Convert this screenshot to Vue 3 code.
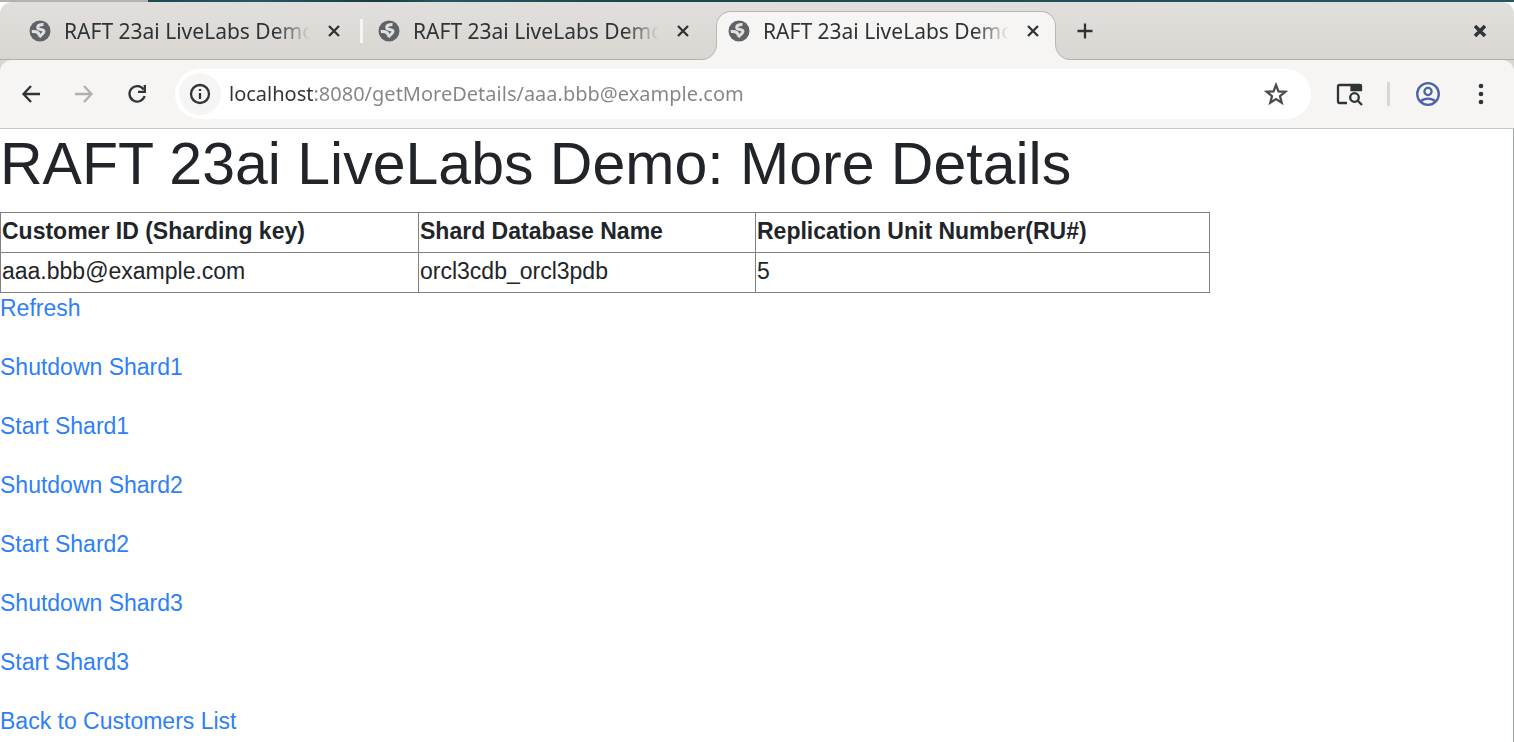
<script setup>
import { ref } from 'vue'

const title = 'RAFT 23ai LiveLabs Demo: More Details'
const tabs = [
  { id: 1, active: false },
  { id: 2, active: false },
  { id: 3, active: true },
]
const address = ref('localhost:8080/getMoreDetails/aaa.bbb@example.com')
const actions = [
  'Refresh',
  'Shutdown Shard1',
  'Start Shard1',
  'Shutdown Shard2',
  'Start Shard2',
  'Shutdown Shard3',
  'Start Shard3',
  'Back to Customers List',
]
</script>

<template>
  <div class="window">
    <div class="desktop"></div>
    <header class="strip">
      <div class="tabs">
        <div v-for="tab in tabs" :key="tab.id" class="tab" :class="{ active: tab.active }">
          <svg v-if="tab.active" class="flare left" viewBox="0 0 16 16" aria-hidden="true">
            <path class="fill" d="M16 0v16H0C9 16 15.5 9 15.5 0z" />
            <path class="edge" d="M0 15.5C9 15.5 15.5 9 15.5 0" />
          </svg>
          <button class="tab-label">
            <svg class="globe" viewBox="0 0 22 22" aria-hidden="true">
              <circle cx="11" cy="11" r="10.5" />
              <path class="land" d="M14.500 4.400C11.500 4.200 8.300 5.500 8.800 8C9.300 10.300 14.500 8.700 15 11.400C15.200 13.800 12 14 10.500 17.300" />
              <path class="land" d="M2.800 11.600C6 11.200 9.800 11.800 10.300 15.500" />
            </svg>
            <span class="tab-title">{{ title }}</span>
          </button>
          <button class="tab-close" aria-label="Close tab">
            <svg width="14" height="14" viewBox="0 0 14 14"><path d="M2 2l10 10M12 2L2 12" /></svg>
          </button>
          <svg v-if="tab.active" class="flare right" viewBox="0 0 16 16" aria-hidden="true">
            <path class="fill" d="M0 0v16H16C7 16 .5 9 .5 0z" />
            <path class="edge" d="M16 15.5C7 15.500 .5 9 .5 0" />
          </svg>
        </div>
      </div>
      <button class="new-tab" aria-label="New tab">
        <svg width="16" height="16" viewBox="0 0 16 16"><path d="M8 .5v15M.5 8h15" /></svg>
      </button>
      <button class="close-window" aria-label="Close window">
        <svg width="14" height="14" viewBox="0 0 14 14"><path d="M2 2l10 10M12 2L2 12" /></svg>
      </button>
    </header>

    <div class="toolbar-back">
      <nav class="toolbar">
        <button class="tool" aria-label="Back">
          <svg width="20" height="20" viewBox="0 0 20 20"><path d="M19 10H3M10 2L2.500 10l7.500 8" /></svg>
        </button>
        <button class="tool off" aria-label="Forward" disabled>
          <svg width="20" height="20" viewBox="0 0 20 20"><path d="M1 10h16M10 2l7.500 8-7.500 8" /></svg>
        </button>
        <button class="tool" aria-label="Reload">
          <svg width="20" height="20" viewBox="0 0 20 20">
            <path d="M16.600 5.500A7.700 7.700 0 1 0 17.600 12" />
            <path d="M17.800 1v6.800H11" />
          </svg>
        </button>
        <div class="address">
          <button class="site-info" aria-label="Site information">
            <svg width="22" height="22" viewBox="0 0 22 22">
              <circle cx="11" cy="11" r="9" />
              <path d="M11 10v6M11 6v2" />
            </svg>
          </button>
          <input v-model="address" class="url" type="text" aria-label="Address" spellcheck="false" />
          <button class="tool star" aria-label="Bookmark this page">
            <svg width="24" height="24" viewBox="0 0 24 24">
              <path d="M12 3l2.500 6.300 6.700.5-5.200 4.300 1.700 6.600L12 17.100l-5.700 3.600L8 14.100 2.800 9.800l6.700-.5z" />
            </svg>
          </button>
        </div>
        <button class="tool" aria-label="Side panel search">
          <svg width="28" height="24" viewBox="0 0 28 24">
            <path d="M11 21H3.500Q2 21 2 19.500V4.500Q2 3 3.500 3H23.500Q25 3 25 4.500V9" />
            <path class="solid" d="M15.500 3.500h9V8h-9z" />
            <circle cx="18.500" cy="15.500" r="4.300" />
            <path d="M21.500 18.500l4.500 4.500" />
          </svg>
        </button>
        <span class="divider"></span>
        <button class="tool profile" aria-label="Profile">
          <svg width="24" height="24" viewBox="0 0 24 24">
            <circle cx="12" cy="12" r="10.800" />
            <circle cx="12" cy="9.500" r="3.600" />
            <path d="M4.500 19.500C8.500 15.600 15.500 15.600 19.500 19.500" />
          </svg>
        </button>
        <button class="tool menu" aria-label="Menu">
          <svg width="6" height="22" viewBox="0 0 6 22">
            <circle cx="3" cy="3" r="2.300" /><circle cx="3" cy="11" r="2.300" /><circle cx="3" cy="19" r="2.300" />
          </svg>
        </button>
      </nav>
    </div>

    <main class="page">
      <h1>{{ title }}</h1>
      <table>
        <thead>
          <tr>
            <th class="customer">Customer ID (Sharding key)</th>
            <th class="shard">Shard Database Name</th>
            <th>Replication Unit Number(RU#)</th>
          </tr>
        </thead>
        <tbody>
          <tr>
            <td>aaa.bbb@example.com</td>
            <td>orcl3cdb_orcl3pdb</td>
            <td>5</td>
          </tr>
        </tbody>
      </table>
      <ul class="actions">
        <li v-for="action in actions" :key="action"><a href="#">{{ action }}</a></li>
      </ul>
    </main>
  </div>
</template>

<style>
body {
  overflow: hidden;
}
</style>

<style scoped>
.window {
  display: flex;
  flex-direction: column;
  min-height: 100vh;
  background: #fff;
  color: #212529;
  font-family: "Noto Sans", sans-serif;
}
.window * {
  box-sizing: border-box;
}
button {
  display: flex;
  align-items: center;
  justify-content: center;
  padding: 0;
  border: 0;
  background: none;
  color: inherit;
  font: inherit;
}
svg {
  flex: none;
  fill: none;
  stroke: currentColor;
  stroke-width: 2.3;
}
.desktop {
  height: 2px;
  background: linear-gradient(90deg, #b4b2b0 148px, #1d4a50 148px, #24585e 260px, #163b40 380px, #24585e 440px, #1b464b 620px, #24585e);
}
.strip {
  display: flex;
  align-items: stretch;
  height: 58px;
  padding: 0 13px 0 18px;
  border-bottom: 1px solid #b3b1af;
  border-radius: 12px 12px 0 0;
  background: linear-gradient(#e1dfdc, #dad6d2);
  color: #2e3436;
}
.tabs {
  display: flex;
  gap: 11px;
}
.tab {
  position: relative;
  display: flex;
  align-items: center;
  width: 338px;
  height: 49px;
  margin-top: 9px;
  padding: 0 8px 9px 11px;
}
.tab:first-child::after {
  content: "";
  position: absolute;
  right: -7px;
  top: 8px;
  width: 3px;
  height: 24px;
  background: #f6f5f4;
}
.tab.active {
  width: 340px;
  padding-bottom: 10px;
  border: 1px solid #b9b7b4;
  border-bottom: 0;
  border-radius: 15px 15px 0 0;
  background: #f6f5f4;
}
.flare {
  position: absolute;
  bottom: 0;
  width: 16px;
  height: 16px;
  stroke-width: 1;
}
.flare .fill {
  fill: #f6f5f4;
  stroke: none;
}
.flare .edge {
  stroke: #b9b7b4;
}
.left {
  right: 100%;
}
.right {
  left: 100%;
}
.tab-label {
  flex: 1;
  min-width: 0;
  gap: 13px;
  justify-content: flex-start;
}
.globe {
  width: 22px;
  height: 22px;
}
.globe circle {
  fill: #5f6368;
  stroke: none;
}
.land {
  stroke: #e2dfdc;
  stroke-width: 3;
}
.tab-title {
  flex: 1;
  overflow: hidden;
  white-space: nowrap;
  text-align: left;
  font-size: 21px;
  line-height: 30px;
  mask-image: linear-gradient(90deg, #000 212px, transparent 246px);
}
.tab-close {
  width: 28px;
  height: 28px;
}
.new-tab {
  width: 42px;
  margin-left: 8px;
}
.close-window {
  width: 42px;
  margin-left: auto;
}
.close-window svg {
  stroke-width: 3.5;
}
.toolbar-back {
  background: #dad6d2;
}
.toolbar {
  display: flex;
  align-items: center;
  gap: 11px;
  height: 69px;
  padding: 0 12px 0 10px;
  border-bottom: 1px solid #cdc7c2;
  border-radius: 12px 12px 0 0;
  background: #f6f5f4;
  color: #2e3436;
}
.tool {
  flex: none;
  width: 42px;
  height: 42px;
}
.off {
  color: #b0b0af;
}
.address {
  display: flex;
  flex: 1;
  align-items: center;
  height: 50px;
  margin: 0 7px 0 6px;
  padding: 0 14px 0 4px;
  border-radius: 25px;
  background: #fff;
}
.site-info {
  width: 42px;
  height: 42px;
  border-radius: 50%;
  background: #f6f5f4;
}
.url {
  flex: 1;
  min-width: 0;
  margin-left: 8px;
  padding: 0;
  border: 0;
  outline: 0;
  color: #808080;
  font: 20px/30px "Noto Sans", sans-serif;
  background: linear-gradient(90deg, #2e3436 84px, #858585 84px);
  background-clip: text;
  -webkit-text-fill-color: transparent;
}
.star {
  color: #4a4e50;
}
.solid {
  fill: currentColor;
}
.divider {
  width: 3px;
  height: 24px;
  margin: 0 6px 0 5px;
  background: #d9d6d1;
}
.profile {
  color: #4a64a5;
}
.menu svg {
  fill: currentColor;
  stroke: none;
}
.page {
  flex: 1;
  border-right: 1px solid #9aa5a3;
  font-family: "Liberation Sans", Arial, sans-serif;
  font-size: 23px;
  line-height: 30px;
}
h1 {
  margin: 0;
  padding-bottom: 13px;
  font-size: 59px;
  font-weight: 400;
  line-height: 70px;
}
table {
  width: 80%;
  border-collapse: collapse;
  table-layout: fixed;
}
th,
td {
  height: 40px;
  padding: 0 1px 3px;
  border: 1px solid #808080;
  text-align: left;
}
.customer {
  width: 418px;
}
.shard {
  width: 337px;
}
.actions {
  margin: 0;
  padding: 0;
  list-style: none;
}
.actions li {
  height: 59px;
}
.actions li:last-child {
  height: 30px;
}
a {
  color: #2f80f5;
  text-decoration: none;
}
</style>
